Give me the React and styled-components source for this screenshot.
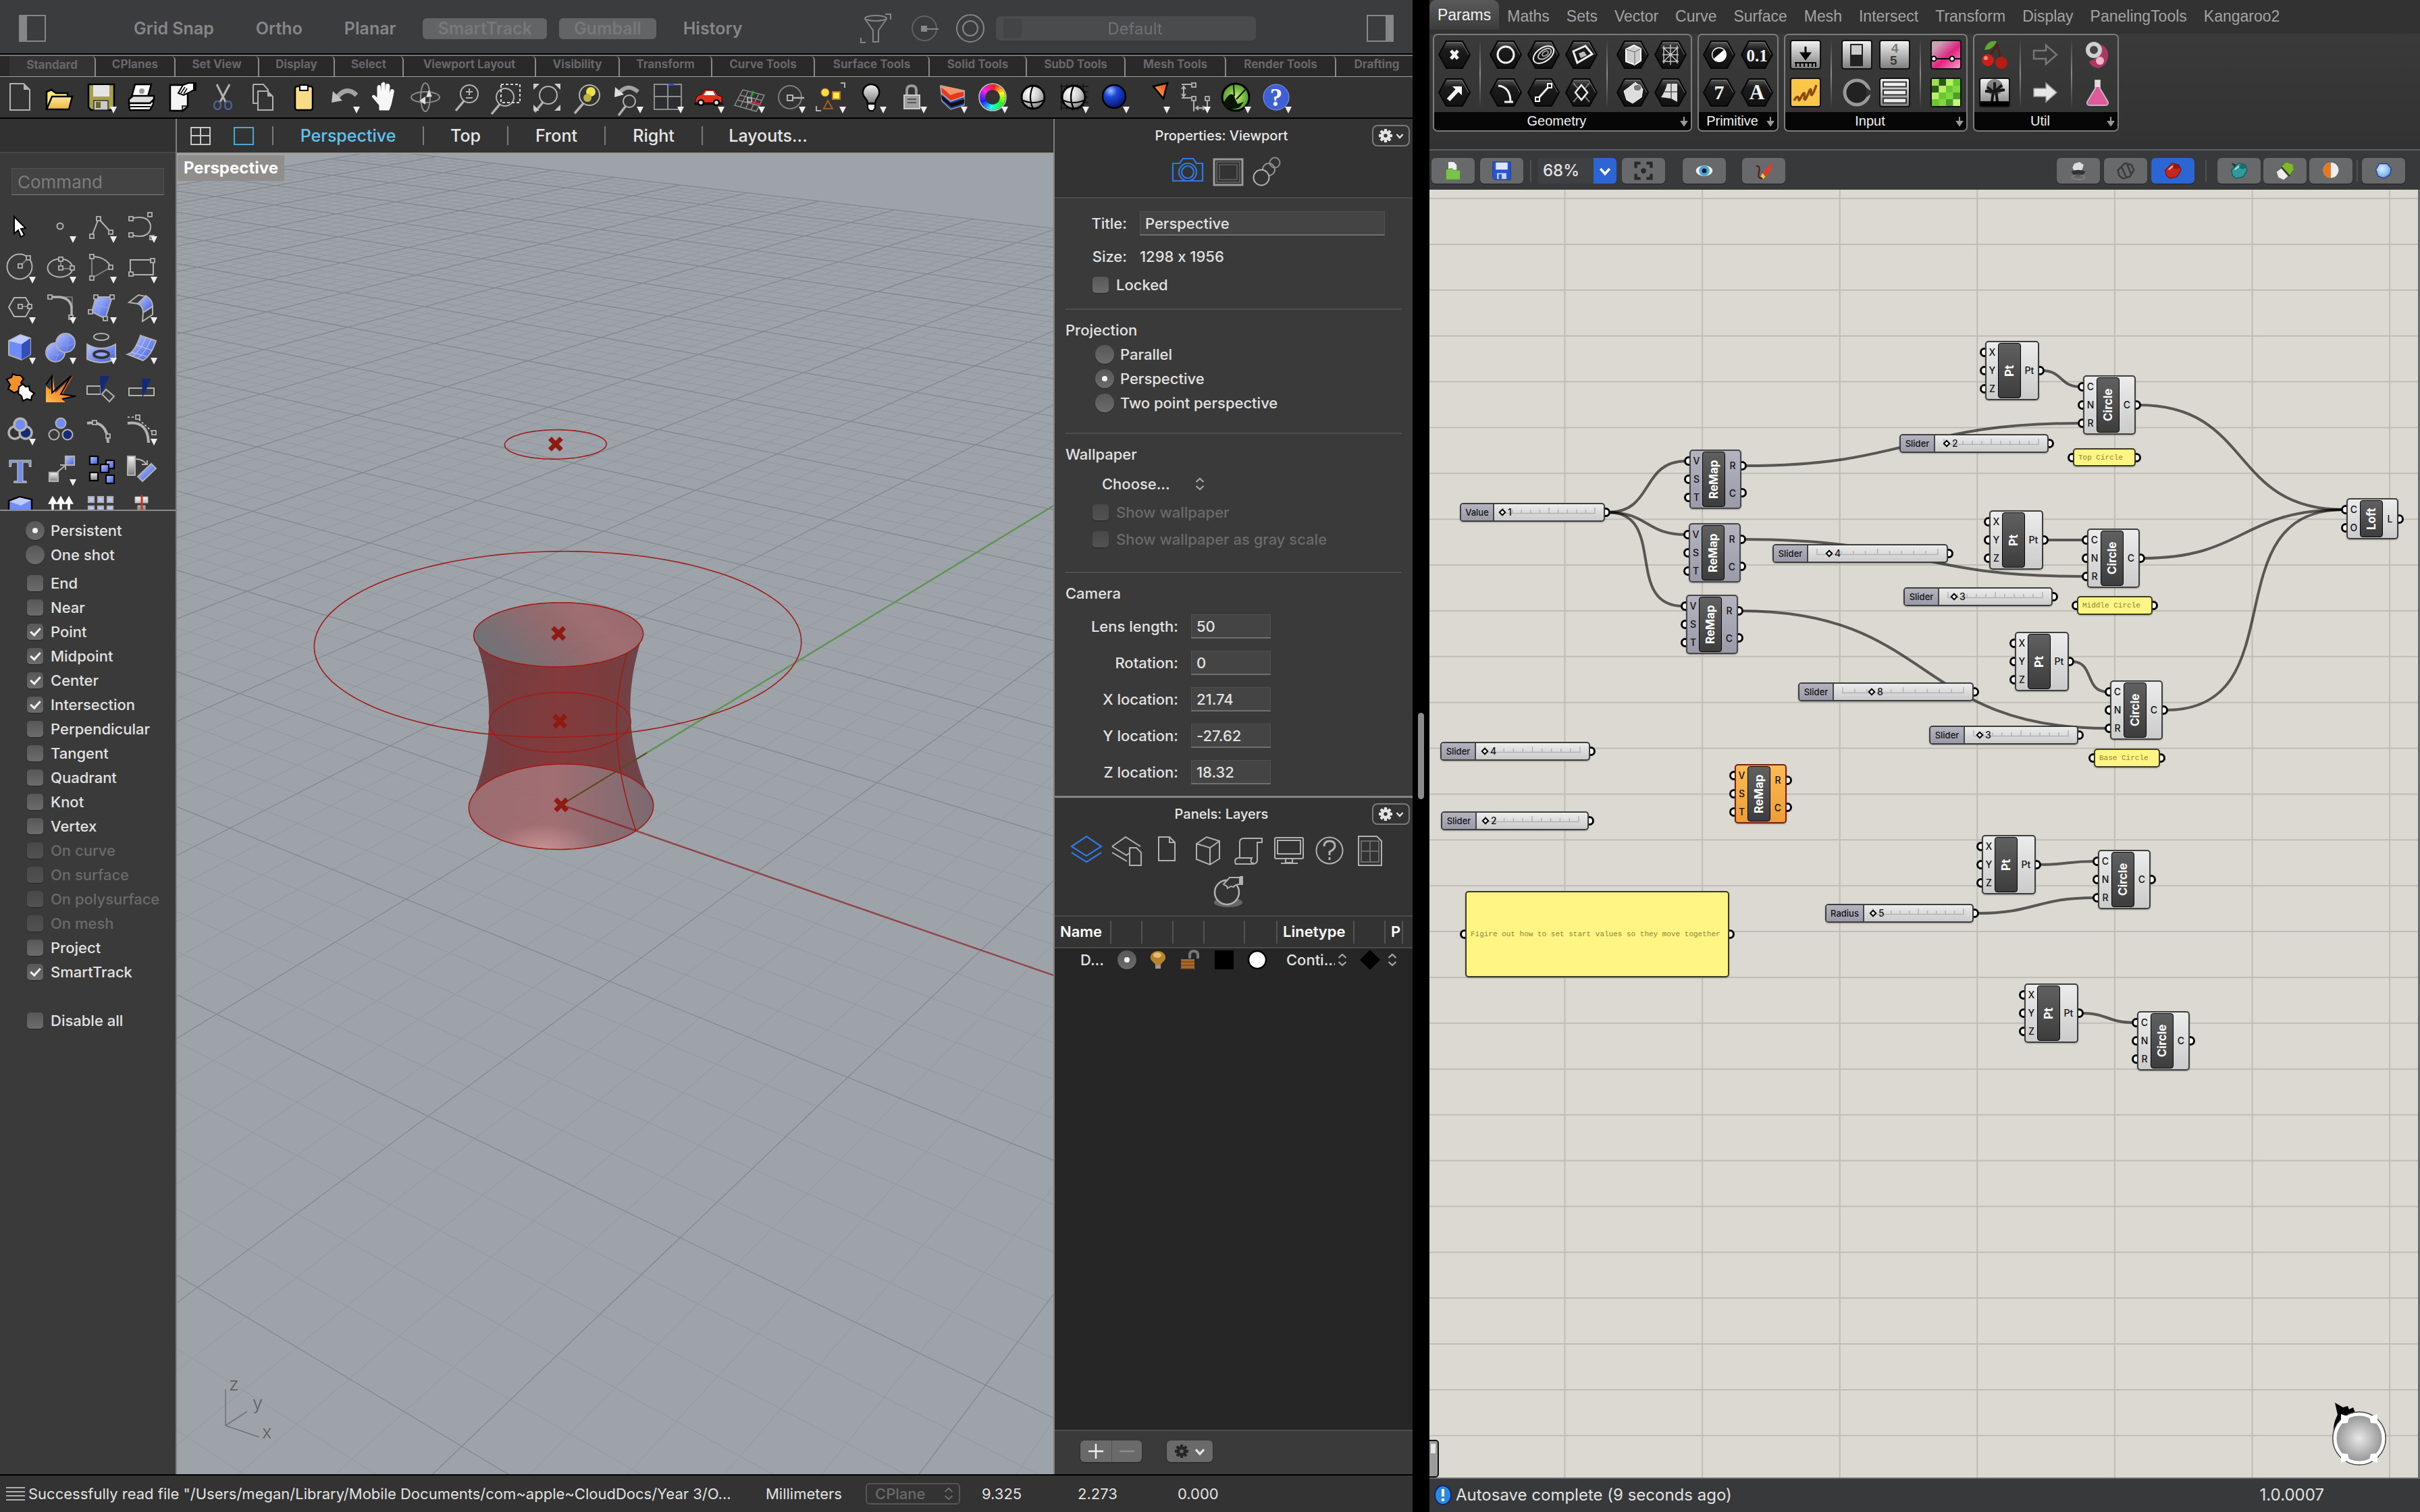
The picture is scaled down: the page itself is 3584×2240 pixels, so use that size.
import React from "react";
import styled, { createGlobalStyle, css } from "styled-components";

const SANS = `Inter, "Liberation Sans", sans-serif`;
const HELV = `"Liberation Sans", Arial, sans-serif`;
const MONO = `"Liberation Mono", "Courier New", monospace`;

const GlobalStyle = createGlobalStyle`
  * { box-sizing: border-box; }
  html, body { margin: 0; padding: 0; background: #000; }
  body { font-family: ${SANS}; font-feature-settings: "calt" 0; color: #e2e2e2; font-size: 22px; }
  button, input, select { font: inherit; font-feature-settings: inherit; color: inherit; margin: 0; }
  button { padding: 0; border: 0; background: none; }
  svg { display: block; flex: none; }
`;

/* ---------- shell ---------- */

const Desktop = styled.main`
  display: grid;
  grid-template-columns: minmax(0, 1.426fr) 25px minmax(0, 1fr);
  height: 100vh;
  background: #000;
`;

const Splitter = styled.div`
  display: flex;
  align-items: center;
  justify-content: center;
`;

const SplitterGrip = styled.span`
  width: 9px;
  height: 128px;
  border-radius: 5px;
  background: #8c8c8c;
`;

const Window = styled.section`
  display: flex;
  flex-direction: column;
  min-width: 0;
  min-height: 0;
  overflow: hidden;
`;

/* ---------- modeller: top bar ---------- */

const TopBar = styled.header`
  display: flex;
  align-items: center;
  height: 81px;
  flex: none;
  padding: 5px 28px 0;
  background: #3b3c3e;
  border-bottom: 2px solid #000;
`;

const IconButton = styled.button`
  display: flex;
  align-items: center;
  justify-content: center;
  width: ${(p) => p.$w || 60}px;
  height: ${(p) => p.$h || 60}px;
  flex: none;
  overflow: hidden;
`;

const SnapGroup = styled.div`
  display: flex;
  gap: 18px;
  margin-left: 108px;
`;

const SnapButton = styled.button`
  height: 31px;
  padding: 0 22px;
  border-radius: 6px;
  font-size: 25px;
  line-height: 31px;
  font-weight: 600;
  white-space: nowrap;
  color: ${(p) => (p.$on ? "#77787a" : "#868688")};
  background: ${(p) => (p.$on ? "#636466" : "transparent")};
`;

const TopTools = styled.div`
  display: flex;
  align-items: center;
  margin-left: auto;
`;

const StyleField = styled.button`
  display: flex;
  align-items: center;
  width: 385px;
  height: 36px;
  margin: 0 164px 0 8px;
  padding: 0 11px;
  border-radius: 7px;
  background: #4a4b4d;
  color: #6f7072;
  font-size: 24px;
`;

const StyleSwatch = styled.span`
  width: 27px;
  height: 28px;
  background: #434446;
`;

const StyleName = styled.span`
  flex: 1;
  text-align: center;
`;

/* ---------- modeller: tool tabs ---------- */

const ToolTabs = styled.nav`
  display: flex;
  height: 33px;
  flex: none;
  padding-left: 14px;
  overflow: hidden;
  background: #292929;
  border-top: 2px solid #77767c;
  border-bottom: 1px solid #a0a0a0;
`;

const ToolTab = styled.button`
  width: ${(p) => p.$w}px;
  height: ${(p) => (p.$on ? 31 : 30)}px;
  flex: none;
  border-right: 2px solid #8a8a8a;
  border-radius: 0 6px 0 0;
  font-size: 17px;
  line-height: 24px;
  padding-bottom: 6px;
  font-weight: 700;
  color: #68686a;
  white-space: nowrap;
  background: ${(p) => (p.$on ? "#333" : "transparent")};
`;

const Toolbar = styled.div`
  display: flex;
  height: 62px;
  flex: none;
  background: #333;
  border-bottom: 2px solid #000;
`;

const Workspace = styled.div`
  display: grid;
  grid-template-columns: 262px minmax(0, 1fr) 532px;
  flex: 1;
  min-height: 0;
`;

/* ---------- modeller: sidebar ---------- */

const Sidebar = styled.aside`
  display: flex;
  flex-direction: column;
  min-height: 0;
  border-right: 2px solid #808080;
  background: #3a3a3a;
`;

const SidebarHead = styled.div`
  height: 51px;
  flex: none;
  background: #313131;
  border-bottom: 2px solid #474747;
`;

const CommandInput = styled.input`
  width: 226px;
  height: 40px;
  margin: 22px 17px 17px;
  padding: 0 8px;
  flex: none;
  border: 1px solid #505050;
  border-bottom: 1px solid #808080;
  background: #434343;
  font-size: 26px;
  outline: none;
  &::placeholder { color: #7c7c7c; opacity: 1; }
`;

const ToolGrid = styled.div`
  display: grid;
  grid-template-columns: repeat(4, 60px);
  grid-auto-rows: 60px;
  height: 449px;
  flex: none;
  overflow: hidden;
`;

const SnapOptions = styled.form`
  display: flex;
  flex-direction: column;
  padding-top: 11px;
  border-top: 2px solid #8a8a8a;
`;

const OptionGroup = styled.div`
  display: flex;
  flex-direction: column;
  margin-bottom: ${(p) => p.$gap || 0}px;
`;

const Option = styled.label`
  display: flex;
  align-items: center;
  height: ${(p) => p.$h || 36}px;
  padding-left: ${(p) => p.$indent || 38}px;
  gap: 9px;
  font-size: 22px;
  font-weight: 500;
  color: ${(p) => (p.$off ? "#6a6a6a" : "#e2e2e2")};
`;

const box = css`
  appearance: none;
  display: grid;
  place-items: center;
  flex: none;
  background: linear-gradient(#585858, #6c6c6c);
  box-shadow: 0 1px 1px rgba(0, 0, 0, 0.35);
  &:disabled { background: linear-gradient(#494949, #525252); }
`;

const Check = styled.input.attrs({ type: "checkbox" })`
  ${box}
  width: 24px;
  height: 24px;
  margin: 0 2px;
  border-radius: 5px;
  &:checked::after {
    content: "";
    width: 6px;
    height: 12px;
    margin-top: -4px;
    border: solid #f0f0f0;
    border-width: 0 3px 3px 0;
    transform: rotate(42deg);
  }
`;

const Radio = styled.input.attrs({ type: "radio" })`
  ${box}
  width: 28px;
  height: 28px;
  border-radius: 50%;
  &:checked::after {
    content: "";
    width: 8px;
    height: 8px;
    border-radius: 50%;
    background: #f2f2f2;
  }
`;

/* ---------- modeller: viewport ---------- */

const ViewColumn = styled.div`
  display: flex;
  flex-direction: column;
  min-width: 0;
  min-height: 0;
`;

const ViewTabs = styled.nav`
  display: flex;
  align-items: center;
  height: 52px;
  flex: none;
  padding: 0 0 0 3px;
  background: #333;
  border-bottom: 2px solid #9c9c98;
`;

const ViewTabRow = styled.div`
  display: flex;
  margin-left: 10px;
`;

const ViewTab = styled.button`
  height: 28px;
  width: ${(p) => p.$w}px;
  border-left: 2px solid #7a7a7a;
  font-size: 25px;
  line-height: 28px;
  font-weight: 500;
  color: ${(p) => (p.$on ? "#62c4ec" : "#e6e6e6")};
`;

const Viewport = styled.div`
  position: relative;
  flex: 1;
  min-height: 0;
  overflow: hidden;
  background: #9ea3aa;
  & > svg { width: 100%; height: 100%; }
`;

const ViewLabel = styled.h2`
  position: absolute;
  left: 1px;
  top: 2px;
  margin: 0;
  padding: 0 9px;
  font-size: 24px;
  line-height: 38px;
  font-weight: 700;
  color: #fff;
  background: #8f8e8c;
`;

/* ---------- modeller: right panels ---------- */

const Panels = styled.aside`
  display: flex;
  flex-direction: column;
  min-width: 0;
  min-height: 0;
  border-left: 2px solid #808080;
  background: #3a3a3a;
`;

const PanelHead = styled.header`
  display: flex;
  flex-direction: column;
  flex: none;
  background: #333;
  border-bottom: 2px solid #4a4a4a;
`;

const LayerHeadBlock = styled(PanelHead)`
  border-top: 3px solid #848484;
`;

const PanelTitleRow = styled.div`
  display: grid;
  grid-template-columns: 24px 1fr 60px;
  align-items: center;
  height: ${(p) => p.$h}px;
`;

const PanelTitle = styled.h2`
  margin: 0;
  text-align: center;
  font-size: 20px;
  font-weight: 500;
  color: #e8e8e8;
`;

const GearButton = styled.button`
  display: flex;
  align-items: center;
  justify-content: center;
  gap: 4px;
  width: 56px;
  height: 32px;
  border: 2px solid #7a7a7a;
  border-radius: 8px;
`;

const IconRow = styled.div`
  display: flex;
  flex-wrap: wrap;
  justify-content: center;
  padding: 0 25px 6px 10px;
`;

const Section = styled.section`
  display: flex;
  flex-direction: column;
  margin: 0 16px;
  padding: ${(p) => p.$pad};
  border-bottom: ${(p) => (p.$last ? "0" : "2px solid #4e4e4e")};
`;

const SectionTitle = styled.h3`
  margin: 0 0 ${(p) => p.$gap || 0}px;
  height: 36px;
  font-size: 22px;
  line-height: 36px;
  font-weight: 500;
`;

const Field = styled.div`
  display: grid;
  grid-template-columns: ${(p) => p.$label}px 1fr;
  column-gap: 19px;
  align-items: center;
  height: ${(p) => p.$h}px;
  font-size: 22px;
  font-weight: 500;
`;

const FieldLabel = styled.label`
  text-align: right;
`;

const TextInput = styled.input`
  width: ${(p) => p.$w};
  height: 36px;
  padding: 0 7px;
  border: 1px solid #505050;
  border-bottom: 2px solid #707070;
  background: #444;
  font-size: 22px;
  font-weight: 500;
  outline: none;
`;

const SelectBox = styled.span`
  display: inline-flex;
  align-items: center;
  gap: 4px;
  padding: ${(p) => p.$pad || "0"};
  width: ${(p) => p.$w}px;
  height: ${(p) => p.$h || 36}px;
  border: ${(p) => (p.$framed ? "2px solid #565656" : "0")};
  border-radius: 6px;
  color: ${(p) => (p.$framed ? "#6a6a6a" : "inherit")};
`;

const Select = styled.select`
  appearance: none;
  flex: 1;
  min-width: 0;
  border: 0;
  padding: 0;
  background: transparent;
  font-size: 22px;
  font-weight: 500;
  outline: none;
  &:disabled { opacity: 1; }
`;

const BarSelect = styled(Select)`
  padding-left: 7px;
  font-size: 24px;
`;

const LayerTable = styled.table`
  width: 100%;
  table-layout: fixed;
  border-collapse: collapse;
  font-size: 22px;
`;

const LayerHead = styled.th`
  width: ${(p) => (p.$w ? p.$w + "px" : "auto")};
  height: 46px;
  padding: 0;
  text-align: left;
  font-weight: 600;
  color: #fff;
  background: #333;
  border-bottom: 2px solid #4a4a4a;
`;

const HeadCell = styled.span`
  display: block;
  height: 34px;
  line-height: 32px;
  padding-left: 8px;
  overflow: hidden;
  border-right: ${(p) => (p.$last ? "0" : "2px solid #525252")};
`;

const LayerCell = styled.td`
  height: 34px;
  padding: 0 ${(p) => p.$right || 0}px 0 ${(p) => p.$pad || 0}px;
  font-weight: 500;
  white-space: nowrap;
  & > svg, & > input { margin: 0 auto; }
`;

const LayerList = styled.div`
  flex: 1;
  min-height: 0;
  background: #262626;
`;

const PanelFoot = styled.footer`
  display: flex;
  align-items: flex-start;
  gap: 37px;
  height: 66px;
  flex: none;
  padding: 14px 38px;
  border-top: 2px solid #4c4c4c;
`;

const Segments = styled.div`
  display: flex;
  border-radius: 6px;
  background: #6a6a6a;
  box-shadow: 0 1px 2px rgba(0, 0, 0, 0.4);
`;

const Segment = styled.button`
  display: flex;
  align-items: center;
  justify-content: center;
  gap: 8px;
  width: ${(p) => p.$w}px;
  height: 32px;
  border-left: ${(p) => (p.$split ? "1px solid #555" : "0")};
`;

const StatusBar = styled.footer`
  display: grid;
  grid-template-columns: 33px 1092px 148px 172px 142px 148px 1fr;
  align-items: center;
  height: 56px;
  flex: none;
  padding-left: 9px;
  border-top: 2px solid #000;
  background: #333;
  font-size: 22px;
  white-space: nowrap;
`;

/* ---------- node editor: chrome ---------- */

const EditorTabs = styled.nav`
  display: flex;
  align-items: flex-start;
  height: 50px;
  flex: none;
  background: #323232;
`;

const EditorTab = styled.button`
  margin-left: ${(p) => (p.$on ? 0 : 12)}px;
  margin-right: ${(p) => (p.$on ? 0 : 13)}px;
  padding: ${(p) => (p.$on ? "0 12px" : "0")};
  height: 44px;
  line-height: ${(p) => (p.$on ? 40 : 48)}px;
  border-radius: 10px 10px 0 0;
  font-family: ${HELV};
  font-size: 23px;
  color: ${(p) => (p.$on ? "#f0f0f0" : "#a3a3a3")};
  background: ${(p) => (p.$on ? "linear-gradient(#5a5a5a, #3c3c3c)" : "none")};
`;

const Ribbon = styled.div`
  display: flex;
  gap: 8px;
  height: 171px;
  flex: none;
  padding: 0 5px 26px;
  background: linear-gradient(#3a3a3a, #323232);
`;

const RibbonPanel = styled.section`
  display: flex;
  flex-direction: column;
  border: 2px solid #7d7d7d;
  border-radius: 7px;
  overflow: hidden;
`;

const RibbonBody = styled.div`
  display: flex;
  flex: 1;
  padding: 7px 6px;
`;

const RibbonGroup = styled.div`
  display: grid;
  grid-template-rows: 44px 44px;
  grid-auto-flow: column;
  grid-auto-columns: 48px;
  gap: 12px 8px;
  & + & {
    margin-left: 13px;
    padding-left: 13px;
    border-left: 2px solid;
    border-image: linear-gradient(transparent, #8a8a8a, transparent) 1;
  }
`;

const RibbonFoot = styled.h3`
  display: flex;
  align-items: center;
  height: 27px;
  margin: 0;
  padding-right: 3px;
  background: #060606;
  font-family: ${HELV};
  font-size: 20px;
  font-weight: 400;
  color: #f0f0f0;
`;

const RibbonName = styled.span`
  flex: 1;
  text-align: center;
`;

const EditorBar = styled.div`
  display: flex;
  align-items: center;
  height: 60px;
  flex: none;
  padding: 1px 22px 0 3px;
  border-top: 2px solid #5e5f60;
  background: #38393b;
`;

const BarButton = styled.button`
  display: flex;
  align-items: center;
  justify-content: center;
  width: 64px;
  height: 38px;
  flex: none;
  border-radius: 6px;
  background: ${(p) => (p.$on ? "#2b66d4" : "#68696a")};
  box-shadow: 0 1px 1px rgba(0, 0, 0, 0.4);
`;

const BarGroup = styled.div`
  display: flex;
  align-items: center;
  gap: ${(p) => p.$gap}px;
  margin-left: ${(p) => p.$left || "0"};
`;

const BarRule = styled.span`
  width: 2px;
  height: 32px;
  background: #505152;
`;

const ZoomBox = styled.label`
  display: flex;
  align-items: center;
  width: 116px;
  height: 38px;
  border-radius: 0 6px 6px 0;
  overflow: hidden;
  background: #3f4042;
`;

const ZoomArrow = styled.span`
  display: flex;
  align-items: center;
  justify-content: center;
  width: 34px;
  height: 38px;
  background: #2b66d4;
`;

const EditorStatus = styled.footer`
  display: flex;
  align-items: center;
  justify-content: space-between;
  height: 51px;
  flex: none;
  padding: 0 142px 2px 7px;
  border-top: 2px solid #66676a;
  background: #38393b;
  font-size: 24px;
`;

const StatusText = styled.span`
  display: flex;
  align-items: center;
  gap: 6px;
`;

/* ---------- node editor: canvas ---------- */

const Canvas = styled.div`
  position: relative;
  flex: 1;
  min-height: 0;
  overflow: hidden;
  border-right: 3px solid #6a6c6e;
  background: #dcd9d3;
  color: #111;
`;

const CanvasLayer = styled.svg`
  position: absolute;
  inset: 0;
  width: 100%;
  height: 100%;
`;

const NodeWrap = styled.div`
  position: absolute;
  left: ${(p) => p.$x}px;
  top: ${(p) => p.$y}px;
  width: ${(p) => p.$w}px;
  height: ${(p) => p.$h}px;
`;

const skins = {
  plain: ["#ececec", "#cbcbcb", "#3e3e3e"],
  muted: ["#b4b3bf", "#9b9aa9", "#45454c"],
  picked: ["#fbbb56", "#ee9d35", "#7a1f10"],
  note: ["#fef582", "#fef582", "#3b3b20"],
};

const NodeBody = styled.div`
  position: relative;
  display: grid;
  grid-template-columns: ${(p) => p.$cols || "1fr"};
  width: 100%;
  height: 100%;
  padding: ${(p) => p.$pad || "0"};
  border: 2px solid ${(p) => skins[p.$skin][2]};
  border-radius: 5px;
  overflow: hidden;
  background: linear-gradient(${(p) => skins[p.$skin][0]}, ${(p) => skins[p.$skin][1]});
  box-shadow: 0 1px 2px rgba(0, 0, 0, 0.3);
`;

const Ports = styled.div`
  display: flex;
  flex-direction: column;
  justify-content: space-around;
  text-align: center;
  font-size: 14px;
  line-height: 16px;
  font-weight: 500;
`;

const NodeName = styled.div`
  display: flex;
  align-items: center;
  justify-content: center;
  writing-mode: vertical-rl;
  transform: rotate(180deg);
  border: 1px solid #000;
  border-radius: 4px;
  background: linear-gradient(#3d3d3d, #606060);
  color: #fff;
  font-size: 17px;
  font-weight: 700;
`;

const PortDot = styled.span`
  position: absolute;
  width: 14px;
  height: 14px;
  top: ${(p) => p.$y - 7}px;
  ${(p) => (p.$side === "in" ? "left: -8px;" : "right: -8px;")}
  border: 3px solid #000;
  border-radius: 50%;
  background: #fff;
`;

const SliderName = styled.label`
  display: flex;
  align-items: center;
  justify-content: center;
  font-size: 13px;
  font-weight: 500;
  background: linear-gradient(#b4b3bf, #9b9aa9);
  border-right: 2px solid #45454c;
`;

const SliderTrack = styled.div`
  position: relative;
`;

const Ticks = styled.svg`
  position: absolute;
  left: 12px;
  top: 4px;
  width: calc(100% - 24px);
  height: 12px;
`;

const Range = styled.input.attrs({ type: "range" })`
  appearance: none;
  position: absolute;
  inset: 0;
  width: 100%;
  height: 23px;
  background: transparent;
  outline: none;
  &::-webkit-slider-thumb {
    appearance: none;
    width: 8px;
    height: 8px;
    border: 2px solid #000;
    background: #fff;
    transform: rotate(45deg);
  }
`;

const SliderValue = styled.output`
  position: absolute;
  top: 4px;
  font-size: 14px;
  line-height: 16px;
  font-weight: 500;
`;

const NoteText = styled.p`
  align-self: center;
  margin: 0;
  padding-left: 6px;
  font-family: ${MONO};
  font-size: 11px;
  line-height: 14px;
  color: #8c8440;
  white-space: nowrap;
`;

/* ---------- icon helpers ---------- */

const LINE = "#b2b2b2";
const g = { fill: "none", stroke: LINE, strokeWidth: 2 };
const Glyph = ({ s = 60, vb = "0 0 60 60", children }) => (
  <svg width={s} height={s} viewBox={vb} aria-hidden="true">{children}</svg>
);
const Hd = ({ x, y }) => (
  <rect x={x - 3} y={y - 3} width="6" height="6" fill="#3a3a3a" stroke={LINE} strokeWidth="1.8" />
);
const Drop = () => <path d="M43 44h10l-5 10z" fill="#eee" />;

const Palette = styled.svg`
  position: absolute;
  width: 0;
  height: 0;
`;

const Defs = () => (
  <Palette aria-hidden="true">
    <defs>
      <linearGradient id="blue" x1="0" y1="0" x2="1" y2="1">
        <stop offset="0" stopColor="#b9c6fb" /><stop offset="1" stopColor="#3d5be0" />
      </linearGradient>
      <linearGradient id="gold" x1="0" y1="0" x2="0" y2="1">
        <stop offset="0" stopColor="#ffe79a" /><stop offset="1" stopColor="#eab640" />
      </linearGradient>
      <linearGradient id="fire" x1="0" y1="1" x2="1" y2="0">
        <stop offset="0" stopColor="#fcc244" /><stop offset="1" stopColor="#e8401c" />
      </linearGradient>
      <linearGradient id="steel" x1="0" y1="0" x2="0" y2="1">
        <stop offset="0" stopColor="#f4f4f4" /><stop offset="1" stopColor="#7c7c7c" />
      </linearGradient>
      <linearGradient id="pink" x1="0" y1="0" x2="1" y2="1">
        <stop offset="0.2" stopColor="#c9a0b4" /><stop offset="0.55" stopColor="#e0237f" /><stop offset="1" stopColor="#f8a4d0" />
      </linearGradient>
      <linearGradient id="hexfill" x1="0" y1="0" x2="0" y2="1">
        <stop offset="0" stopColor="#5a5a5a" /><stop offset="0.3" stopColor="#1c1c1c" /><stop offset="1" stopColor="#111" />
      </linearGradient>
      <radialGradient id="ball" cx="0.35" cy="0.3" r="0.8">
        <stop offset="0" stopColor="#fff" /><stop offset="0.5" stopColor="#d0d0d0" /><stop offset="1" stopColor="#6a6a6a" />
      </radialGradient>
      <radialGradient id="blueball" cx="0.35" cy="0.25" r="0.8">
        <stop offset="0" stopColor="#9fc0ff" /><stop offset="0.35" stopColor="#1d48d8" /><stop offset="1" stopColor="#06106a" />
      </radialGradient>
      <radialGradient id="sky" cx="0.4" cy="0.35" r="0.7">
        <stop offset="0" stopColor="#d8efff" /><stop offset="0.7" stopColor="#7fb8f0" /><stop offset="1" stopColor="#2c4fa8" />
      </radialGradient>
      <radialGradient id="green" cx="0.5" cy="0.5" r="0.5">
        <stop offset="0" stopColor="#c8f07a" /><stop offset="1" stopColor="#4f9a28" />
      </radialGradient>
      <radialGradient id="dial" cx="0.5" cy="0.5" r="0.5">
        <stop offset="0" stopColor="#e8e8e8" /><stop offset="1" stopColor="#8c8c8c" />
      </radialGradient>
    </defs>
  </Palette>
);

const Gear = ({ s = 22, c = "#e4e4e4", hole = "#333" }) => (
  <svg width={s} height={s} viewBox="-12 -12 24 24" aria-hidden="true">
    {[0, 45, 90, 135].map((a) => (
      <rect key={a} x="-2.4" y="-11" width="4.8" height="22" rx="1" fill={c} transform={`rotate(${a})`} />
    ))}
    <circle r="5.6" fill="none" stroke={c} strokeWidth="4.6" />
    <circle r="3" fill={hole} />
  </svg>
);
const Chevron = ({ c = "#e4e4e4", s = 12 }) => (
  <svg width={s} height={s} viewBox="0 0 12 12" aria-hidden="true">
    <path d="M1.5 4l4.5 5 4.5-5" fill="none" stroke={c} strokeWidth="2.4" />
  </svg>
);
const UpDown = ({ c = "#a8a8a8" }) => (
  <svg width="14" height="20" viewBox="0 0 14 20" aria-hidden="true">
    <path d="M1.500 7L7 2l5.500 5M1.500 13L7 18l5.500-5" fill="none" stroke={c} strokeWidth="2.200" />
  </svg>
);

/* ---------- standard toolbar ---------- */

const lens = (x, y, r) => (
  <>
    <circle cx={x} cy={y} r={r} {...g} />
    <path d={`M${x - r * 0.6} ${y + r * 0.8}L${x - r - 7} ${y + r + 12}`} stroke={LINE} strokeWidth="3.500" />
  </>
);
const wireBall = (
  <>
    <circle cx="30" cy="30" r="17" fill="url(#ball)" stroke="#000" strokeWidth="3" />
    <path d="M30 13q-8 17 0 34M13 34q17 8 34 0" fill="none" stroke="#000" strokeWidth="2.200" />
  </>
);

const toolbar = [
  ["New", false, <><path d="M15 10h20l9 9v30H15z" {...g} /><path d="M35 10v9h9z" fill={LINE} /></>],
  ["Open", false, <><path d="M9 48V22l7-3 7 5h17v8" fill="#fbe67c" stroke="#000" strokeWidth="2.500" /><path d="M9 48l8-19h30l-5 19z" fill="url(#gold)" stroke="#000" strokeWidth="2.500" /></>],
  ["Save", true, <><path d="M11 11h38v38H15l-4-4z" fill="#a79f4a" stroke="#000" strokeWidth="2.500" /><path d="M18 12h24v17H18z" fill="#e4e4e4" /><path d="M19 35h21v14H19z" fill="#c9c9cf" stroke="#333" strokeWidth="1.500" /><path d="M22 37h7v9h-7z" fill="#6c6528" /></>],
  ["Print", false, <><path d="M20 11h24l-5 18H15z" fill="#fff" stroke="#000" strokeWidth="2.500" /><path d="M11 33l6-5h31v6l-6 5H11z" fill="#ddd" stroke="#000" strokeWidth="2.500" /><path d="M11 39h31l5-5v6l-5 9H12z" fill="#fff" stroke="#000" strokeWidth="2.500" /><path d="M12 44h31" stroke="#000" strokeWidth="2" /><circle cx="30" cy="21" r="4" fill="#999" /></>],
  ["Document properties", false, <><path d="M12 12h26v32l-7 6H12z" fill="#f5f5f5" stroke="#000" strokeWidth="2.500" /><path d="M30 50v-7h8z" fill="#bbb" stroke="#000" strokeWidth="1.500" /><path d="M24 24l7-12 8-3h8v10l-7 4-8 4z" fill="#fff" stroke="#000" strokeWidth="2" /><path d="M28 24l6-9M32 25l5-8" stroke="#000" strokeWidth="1.500" /><path d="M47 8h4v13h-4z" fill="#000" /></>],
  ["Cut", false, <><path d="M21 11l13 26M40 11L26 37" stroke={LINE} strokeWidth="3" /><ellipse cx="22" cy="42" rx="5" ry="6" fill="none" stroke="#515f94" strokeWidth="2.500" /><ellipse cx="38" cy="42" rx="5" ry="6" fill="none" stroke="#515f94" strokeWidth="2.500" /></>],
  ["Copy", false, <><path d="M15 11h15l7 8v5M15 11v28h7" {...g} /><path d="M22 21h14l8 8v20H22z" fill="#333" stroke={LINE} strokeWidth="2" /><path d="M36 21v8h8z" fill={LINE} /></>],
  ["Paste", false, <><rect x="17" y="14" width="26" height="35" rx="3" fill="#f8dc86" stroke="#000" strokeWidth="2.500" /><path d="M24 12h12v8H24z" fill="#fff" stroke="#000" strokeWidth="2" /></>],
  ["Undo", true, <><path d="M18 32q14-20 30-5" fill="none" stroke="#a2a2a2" strokeWidth="7" /><path d="M11 38l2-17 14 14z" fill="#c0c0c0" /></>],
  ["Pan", false, <path d="M22 49v-7L11 29q2-5 8 3V16q0-5 4-3l2 13V10q4-4 5 0v16l2-15q4-2 5 2l-1 15 3-9q5-2 4 4l-4 18-3 8z" fill="#f6f6f6" stroke="#fff" />],
  ["Rotate view", false, <><ellipse cx="30" cy="30" rx="21" ry="8" {...g} stroke="#8c8c8c" /><ellipse cx="30" cy="30" rx="7" ry="21" {...g} stroke="#8c8c8c" /><path d="M30 29v12l-9-6zM31 30l4-11 5 10z" fill="#ddd" /></>],
  ["Zoom dynamic", false, <>{lens(35, 25, 13)}<path d="M30 22h10M35 17v10M30 31h10" stroke={LINE} strokeWidth="2" /></>],
  ["Zoom window", false, <>{lens(28, 30, 13)}<rect x="22" y="11" width="28" height="27" fill="none" stroke="#ddd" strokeWidth="2" strokeDasharray="4 3" /></>],
  ["Zoom extents", false, <>{lens(32, 27, 13)}<path d="M10 10h9l-9 9zM50 10v9l-9-9zM50 50h-9l9-9zM10 50v-9l9 9z" fill="#ccc" /></>],
  ["Zoom selected", false, <>{lens(33, 27, 15)}<circle cx="35" cy="22" r="7" fill="#e9e04c" /><circle cx="30" cy="31" r="6" fill="#b9b142" /></>],
  ["Zoom previous", true, <><path d="M16 25q13-17 29-3" fill="none" stroke="#a2a2a2" strokeWidth="6" /><path d="M10 30l1-15 13 11z" fill="#ddd" />{lens(32, 36, 9)}</>],
  ["Viewports", true, <><rect x="9" y="11" width="40" height="37" fill="#2c2e31" stroke="#8f8f8f" strokeWidth="2" /><path d="M29 11v37M9 29h40" stroke="#8f8f8f" strokeWidth="2" /><path d="M30 12h8" stroke="#2440c0" strokeWidth="3" /></>],
  ["Named view", true, <><path d="M8 40h43" stroke="#111" strokeWidth="3" /><path d="M10 34q3-8 9-8l5-7h14l5 8 6 2v9H10z" fill="#e0301c" stroke="#3a0000" /><path d="M26 21h10l3 6H22z" fill="#fff" /><circle cx="18" cy="38" r="4" fill="#ddd" stroke="#000" strokeWidth="2.500" /><circle cx="41" cy="38" r="4" fill="#ddd" stroke="#000" strokeWidth="2.500" /></>],
  ["Construction plane", true, <><path d="M8 42L20 19l32 8-12 24zM12 34l33 9M16 27l33 8M28 21L16 45M36 23L24 47M44 25L32 49" fill="none" stroke="#8c8c8c" strokeWidth="1.500" /><path d="M30 34l6-13" stroke="#2f9a2f" strokeWidth="3" /><path d="M32 36l15 5" stroke="#c23" strokeWidth="3" /><Hd x={30} y={34} /></>],
  ["Object snap", true, <><circle cx="30" cy="30" r="17" fill="none" stroke="#7c7c7c" strokeWidth="2" /><path d="M34 31h17" stroke={LINE} strokeWidth="2.500" /><rect x="26" y="27" width="8" height="8" {...g} /></>],
  ["Select", true, <><circle cx="22" cy="23" r="6" fill="#fbd944" stroke="#b57a20" /><rect x="33" y="22" width="11" height="11" fill="#fbe84c" stroke="#b57a20" strokeWidth="2" /><path d="M26 35l7 12H20z" fill="none" stroke="#a45a20" strokeWidth="2" /><path d="M45 9h6v7M9 43v7h7" {...g} /></>],
  ["Hide", true, <><path d="M30 11c9 0 13 7 12 14-1 6-6 8-6 14H25c0-6-6-8-7-14-1-7 4-14 12-14z" fill="url(#steel)" stroke="#000" strokeWidth="2.500" /><path d="M25 40h11v6l-3 4h-5l-3-4z" fill="#eee" stroke="#000" strokeWidth="2" /></>],
  ["Lock", true, <><path d="M23 27V20q0-7 7-7t7 7v7" fill="none" stroke="#999" strokeWidth="4" /><rect x="19" y="27" width="23" height="20" fill="#9e9e9e" stroke="#ccc" strokeWidth="2" /><path d="M24 33h13M24 38h13" stroke="#555" strokeWidth="2" /></>],
  ["Layers", true, <><path d="M15 36l13 12 20-6V20L13 13z" fill="#2446b0" stroke="#999" strokeWidth="1.500" /><path d="M14 27l14 12 20-6v6l-19 6-14-12z" fill="#111" /><path d="M13 14l14 10 21-3v8l-20 7-14-12z" fill="#e5391d" stroke="#bbb" strokeWidth="1.500" /><path d="M13 12l35 8-21 7z" fill="#f5946c" /></>],
  ["Object color", true, <>{Array.from({ length: 24 }, (_, i) => {
    const a = (i * 15 * Math.PI) / 180, b = ((i + 1.2) * 15 * Math.PI) / 180;
    return <path key={i} d={`M${30 + 15 * Math.sin(a)} ${30 - 15 * Math.cos(a)}L${30 + 15 * Math.sin(b)} ${30 - 15 * Math.cos(b)}`} stroke={`hsl(${i * 15},95%,55%)`} strokeWidth="8" />;
  })}<circle cx="30" cy="30" r="20" fill="none" stroke="#ccc" strokeWidth="1.500" /></>],
  ["Shaded", false, wireBall],
  ["Ghosted", true, <><path d="M10 14h42M10 22h42M10 30h42M10 38h42M10 46h42M12 10v40M20 10v40M28 10v40M36 10v40M44 10v40" stroke="#151515" strokeWidth="1.500" />{wireBall}</>],
  ["Rendered", true, <circle cx="30" cy="29" r="17" fill="url(#blueball)" stroke="#000" strokeWidth="2.500" />],
  ["Spotlight", true, <path d="M28 14l21-5-6 23z" fill="url(#fire)" stroke="#000" strokeWidth="2.500" />],
  ["Dimension", true, <><path d="M10 11h14M10 31h14M13 15v12M10 18l3-4 3 4M10 25l3 4 3-4M28 35v16M48 35v16M32 46h12M35 43l-4 3 4 3M41 43l4 3-4 3" {...g} /><Hd x={28} y={12} /><Hd x={28} y={32} /><Hd x={48} y={32} /></>],
  ["Grasshopper", true, <><circle cx="30" cy="30" r="20" fill="url(#green)" stroke="#000" strokeWidth="3" /><path d="M27 12l1 16M46 17L31 33" fill="none" stroke="#0a1404" strokeWidth="2" /><path d="M12 42q1-9 9-16 7-2 8 6l4 8 9-3-6 8q-12 5-20 0z" fill="#0a1404" /></>],
  ["Help", true, <><circle cx="30" cy="30" r="19" fill="#3f5fd4" stroke="#8aa0f0" /><text x="30" y="43" textAnchor="middle" fontFamily="Liberation Serif, serif" fontWeight="700" fontSize="37" fill="#fff">?</text></>],
];

/* ---------- sidebar tools ---------- */

const blueBall = (x, y, r) => (
  <>
    <circle cx={x} cy={y} r={r} fill="url(#blue)" stroke={LINE} strokeWidth="2" />
    <path d={`M${x - r} ${y}q${r} ${r * 0.6} ${2 * r} 0M${x} ${y - r}q${r * 0.5} ${r} 0 ${2 * r}`} fill="none" stroke="#8a9be8" />
  </>
);
const tile = (x, y, f = "url(#blue)", st = LINE, s = 12) => (
  <rect x={x} y={y} width={s} height={s} fill={f} stroke={st} strokeWidth="2.200" />
);

const sideTools = [
  ["Pointer", 0, <path d="M21 15l17 17-7 1 5 9-5 3-4-10-6 5z" fill="#fff" stroke="#000" strokeWidth="2" />],
  ["Point", 1, <circle cx="29" cy="29" r="4.500" {...g} />],
  ["Polyline", 1, <><path d="M16 44L26 18l18 20" {...g} /><Hd x={16} y={44} /><Hd x={26} y={18} /><Hd x={44} y={38} /></>],
  ["Curve", 1, <><path d="M14 18C34 12 43 20 43 30S34 48 14 42" {...g} /><Hd x={14} y={18} /><Hd x={42} y={12} /><Hd x={14} y={42} /><Hd x={45} y={46} /></>],
  ["Circle", 1, <><circle cx="29" cy="29" r="18.500" {...g} /><path d="M30 28l12-12" stroke="#808080" strokeWidth="2" /><Hd x={30} y={28} /><Hd x={42} y={16} /></>],
  ["Ellipse", 1, <><ellipse cx="29" cy="31" rx="18.500" ry="13.500" {...g} /><path d="M30 18v14h18" fill="none" stroke="#808080" strokeWidth="2" /><Hd x={30} y={18} /><Hd x={30} y={31} /><Hd x={47} y={31} /></>],
  ["Arc", 1, <><path d="M16 14q20 0 28 15" {...g} /><path d="M16 14v32l28-16" fill="none" stroke="#808080" strokeWidth="2" /><Hd x={16} y={14} /><Hd x={44} y={30} /><Hd x={16} y={46} /></>],
  ["Rectangle", 1, <><path d="M13 19h34v22H13z" {...g} /><Hd x={46} y={20} /><Hd x={14} y={40} /></>],
  ["Polygon", 1, <><path d="M13 29l8-14h17l8 14-8 14H21z" {...g} /><path d="M30 28h14" stroke="#808080" strokeWidth="2" /><Hd x={30} y={28} /><Hd x={44} y={28} /></>],
  ["Fillet", 1, <><path d="M28 14h19v16" fill="none" stroke="#808080" strokeWidth="1.500" /><path d="M17 14h11q18 2 18 18v12" fill="none" stroke={LINE} strokeWidth="3.500" /><Hd x={14} y={14} /><Hd x={45} y={44} /></>],
  ["Surface", 1, <><path d="M22 14h24l-10 32-20-10z" fill="url(#blue)" stroke={LINE} strokeWidth="2" /><path d="M34 14l-9 26M18 26l24 4" stroke="#9aa8ee" /><Hd x={22} y={14} /><Hd x={46} y={14} /><Hd x={36} y={46} /><Hd x={14} y={36} /></>],
  ["Bend surface", 1, <><path d="M24 24l12-12q10 6 10 16l-14 9q0-10-8-13z" fill="url(#blue)" stroke={LINE} strokeWidth="2" /><path d="M11 22l14-11 11 2-12 11zM32 37l14-9v12L31 50z" {...g} /></>],
  ["Box", 1, <><path d="M13 19l17-9 15 5v24l-13 8-19-7z" fill="#6f8bf5" stroke={LINE} strokeWidth="2" /><path d="M13 19l17-9 15 5-13 9z" fill="#bccafc" /><path d="M32 24l13-9v24l-13 8z" fill="#3450b8" /></>],
  ["Sphere", 1, <>{blueBall(22, 36, 14)}{blueBall(37, 22, 14)}</>],
  ["Revolve", 1, <><ellipse cx="30" cy="13" rx="11" ry="5" {...g} /><path d="M9 24q21 12 42 0v22q-21 10-42 0z" fill="url(#blue)" stroke={LINE} strokeWidth="2" /><ellipse cx="30" cy="39" rx="11" ry="5" fill="#8ea4f8" stroke="#333" strokeWidth="4" /></>],
  ["Patch", 1, <><path d="M9 39q10-2 19-28l23 8q-6 20-19 29z" fill="url(#blue)" stroke={LINE} strokeWidth="2" /><path d="M16 42q12-8 20-28M24 45q12-10 20-29M22 25l23 8M15 36l22 6" fill="none" stroke="#c4cefc" /></>],
  ["Join", 0, <><path d="M10 16l7-3 2-5 5 2 6 0 5 5-4 6 4 5-6 6-8 4-9-6 3-6z" fill="#f2922c" stroke="#000" strokeWidth="2.200" /><path d="M28 27l6-4 4 4 5-1 1 6 7 5-4 4-1 6-6-2-6 3-2-7-5-4z" fill="#fff" stroke="#000" strokeWidth="2.200" /></>],
  ["Explode", 0, <><path d="M8 50V26l7 6 3-21 4 25 26-25-15 26 18 4-20 4 6 5z" fill="url(#fire)" /><path d="M8 24l9-13 0 25 28-25-15 27 22 3-20 4" fill="none" stroke="#000" strokeWidth="2" /></>],
  ["Trim", 0, <><path d="M9 26h20v12H9z" {...g} /><path d="M31 38l6-7 12 10-7 8z" {...g} /><path d="M28 11h14L29 39z" fill="#152a74" /></>],
  ["Split", 0, <><path d="M11 29h37v11H11z" {...g} /><path d="M30 15h14L31 43z" fill="#152a74" /></>],
  ["Boolean", 1, <><circle cx="22" cy="35" r="9" fill="#333" stroke={LINE} strokeWidth="3.500" /><circle cx="38" cy="35" r="9" fill="#152a74" stroke={LINE} strokeWidth="3.500" /><circle cx="30" cy="23" r="9" fill="#6f8bf5" stroke={LINE} strokeWidth="3.500" /></>],
  ["Group", 0, <><circle cx="30" cy="21" r="7.500" fill="#6f8bf5" stroke={LINE} strokeWidth="2" /><circle cx="20" cy="38" r="7.500" {...g} /><circle cx="40" cy="38" r="7.500" fill="#152a74" stroke={LINE} strokeWidth="2" /></>],
  ["Edit points", 0, <><path d="M9 21q30-5 31 29" fill="none" stroke={LINE} strokeWidth="4" /><Hd x={20} y={20} /><Hd x={40} y={40} /></>],
  ["Control points", 1, <><path d="M9 21q30-4 31 29" fill="none" stroke={LINE} strokeWidth="4" /><path d="M9 12h13l26 24" fill="none" stroke="#ddd" strokeWidth="1.500" strokeDasharray="3 3" /><Hd x={24} y={12} /><Hd x={48} y={35} /></>],
  ["Text", 0, <text x="30" y="49" textAnchor="middle" fontFamily="Liberation Serif, serif" fontWeight="700" fontSize="50" fill="#6f8bf5" stroke={LINE} strokeWidth="1.500">T</text>],
  ["Move", 1, <><path d="M22 36l14-12M29 23h8v7" {...g} />{tile(13, 34, "url(#steel)", LINE, 13)}{tile(37, 10, "url(#blue)", LINE, 13)}</>],
  ["Copy objects", 0, <>{tile(13, 10, "url(#blue)", "#000")}{tile(37, 16, "url(#blue)", "#000")}{tile(29, 22, "url(#blue)", "#000")}{tile(13, 34, "url(#steel)", "#000")}{tile(37, 38, "url(#blue)", "#000")}</>],
  ["Rotate", 0, <><path d="M9 10h11v28H9z" fill="url(#steel)" stroke={LINE} strokeWidth="2" /><path d="M20 14q12 0 17 8M30 22h8v-6" {...g} /><path d="M24 40l20-19 7 7-20 19z" fill="url(#blue)" stroke={LINE} strokeWidth="2" /></>],
  ["Solid edit", 0, <><path d="M13 16l16-6 18 4v36H13z" fill="#6f8bf5" stroke="#000" strokeWidth="2.500" /><path d="M14 17l15-6 17 4-15 8z" fill="#bccafc" /></>],
  ["Extrude", 0, <path d="M18 50V20M30 50V20M42 50V20M14 19l4-7 4 7zM26 19l4-7 4 7zM38 19l4-7 4 7z" stroke="#fff" strokeWidth="3.500" fill="#fff" />],
  ["Array", 0, <>{[0, 1, 2].map((i) => <React.Fragment key={i}>{tile(11 + i * 14, 10, "#b9c6fb", LINE, 8)}{tile(11 + i * 14, 24, "#b9c6fb", LINE, 8)}</React.Fragment>)}</>],
  ["Align", 0, <><path d="M20 10h19v9H20zM24 23h11v8H24z" fill="url(#steel)" stroke={LINE} /><path d="M30 7v30" stroke="#c4302b" strokeWidth="3" /></>],
];

/* ---------- 3D scene ---------- */

const RAD = Math.PI / 180;
const CAM = { x: 21.74, y: -27.62, z: 18.32, yaw: 126.3 * RAD, pitch: 27.83 * RAD, f: 2704 };
const toCam = (x, y, z) => {
  const dx = x - CAM.x, dy = y - CAM.y, dz = z - CAM.z;
  const fwd = dx * Math.cos(CAM.yaw) + dy * Math.sin(CAM.yaw);
  const side = dx * Math.sin(CAM.yaw) - dy * Math.cos(CAM.yaw);
  return [side, fwd * Math.sin(CAM.pitch) + dz * Math.cos(CAM.pitch), fwd * Math.cos(CAM.pitch) - dz * Math.sin(CAM.pitch)];
};
const screen = ([s, u, d]) => [649 + (CAM.f * s) / d, 978 - (CAM.f * u) / d];
const project = (x, y, z) => screen(toCam(x, y, z));
const fmt = (p) => `${p[0].toFixed(1)} ${p[1].toFixed(1)}`;
const segment = (a, b) => {
  let p = toCam(...a), q = toCam(...b);
  const near = 4;
  if (p[2] < near && q[2] < near) return "";
  const cut = (m, n) => {
    const t = (near - m[2]) / (n[2] - m[2]);
    return m.map((v, i) => v + (n[i] - v) * t);
  };
  if (p[2] < near) p = cut(p, q);
  if (q[2] < near) q = cut(q, p);
  return `M${fmt(screen(p))}L${fmt(screen(q))}`;
};
const EXT = 70;
const gridPath = (major) => {
  let d = "";
  for (let i = -EXT; i <= EXT; i++) {
    if ((i % 5 === 0) !== major) continue;
    d += segment([i, -EXT, 0], [i, EXT, 0]) + segment([-EXT, i, 0], [EXT, i, 0]);
  }
  return d;
};
const ring = (r, z) =>
  Array.from({ length: 120 }, (_, i) => project(r * Math.cos(i * 3 * RAD), r * Math.sin(i * 3 * RAD), z));
const closed = (pts) => "M" + pts.map(fmt).join("L") + "Z";
const open = (pts) => "M" + pts.map(fmt).join("L");
const radius = (z) => 2 - 0.4375 * z + 0.09375 * z * z;
const heights = Array.from({ length: 33 }, (_, i) => i / 8);
const extreme = (pts, sign) => pts.reduce((m, p) => (p[0] * sign > m[0] * sign ? p : m));
const arc = (pts, lower) => {
  const l = extreme(pts, -1), r = extreme(pts, 1);
  const side = (p) => p[1] > l[1] + ((r[1] - l[1]) * (p[0] - l[0])) / (r[0] - l[0]);
  return pts.filter((p) => side(p) === lower).sort((a, b) => a[0] - b[0]);
};
const topRing = ring(1.75, 4), baseRing = ring(2, 0);
const leftSide = heights.map((z) => extreme(ring(radius(z), z), -1));
const rightSide = heights.map((z) => extreme(ring(radius(z), z), 1));
const bodyPath = closed([...leftSide, ...arc(topRing, true), ...rightSide.slice().reverse(), ...arc(baseRing, false).reverse()]);
const seam = open(heights.map((z) => project(radius(z), 0, z)));

const Cross = ({ at }) => {
  const [x, y] = project(...at);
  return <path d={`M${x - 6} ${y - 6}l12 12M${x + 6} ${y - 6}l-12 12`} stroke="#8f1a12" strokeWidth="7" strokeLinecap="square" />;
};

const Scene = () => (
  <svg viewBox="0 0 1298 1956" preserveAspectRatio="xMidYMid slice" role="img" aria-label="Perspective view">
    <defs>
      <linearGradient id="body" x1="0" x2="1" y1="0" y2="0">
        <stop offset="0" stopColor="#6a3d41" /><stop offset="0.2" stopColor="#753739" /><stop offset="0.5" stopColor="#823536" />
        <stop offset="0.75" stopColor="#793738" /><stop offset="1" stopColor="#64434a" />
      </linearGradient>
      <linearGradient id="cap" x1="0" x2="1" y1="0.4" y2="0">
        <stop offset="0" stopColor="#6f6e73" /><stop offset="0.4" stopColor="#936669" /><stop offset="0.65" stopColor="#a06a6e" /><stop offset="1" stopColor="#936266" />
      </linearGradient>
      <linearGradient id="foot" x1="0" x2="1" y1="0" y2="0">
        <stop offset="0" stopColor="#9a666a" /><stop offset="0.45" stopColor="#a2696d" /><stop offset="1" stopColor="#77646a" />
      </linearGradient>
      <radialGradient id="shine" cx="0.4" cy="1" r="0.3">
        <stop offset="0" stopColor="#d09a9c" stopOpacity="0.8" /><stop offset="1" stopColor="#d09a9c" stopOpacity="0" />
      </radialGradient>
    </defs>
    <path d={gridPath(false)} stroke="#92989f" strokeWidth="1" fill="none" />
    <path d={gridPath(true)} stroke="#83888d" strokeWidth="1.300" fill="none" />
    <path d={segment([0, 0, 0], [EXT, 0, 0])} stroke="#91474a" strokeWidth="2.500" />
    <path d={segment([0, 0, 0], [0, EXT, 0])} stroke="#5f9553" strokeWidth="2.500" />
    <path d={bodyPath} fill="url(#body)" fillOpacity="0.95" />
    <path d={closed(topRing)} fill="url(#cap)" fillOpacity="0.93" />
    <path d={closed(baseRing)} fill="url(#foot)" fillOpacity="0.9" />
    <path d={closed(baseRing)} fill="url(#shine)" />
    <path d={segment([0, 0, 0], [2, 0, 0])} stroke="#8a3438" strokeWidth="2.500" />
    <path d={segment([0, 0, 0], [0, 3.2, 0])} stroke="#5c4a1c" strokeWidth="2" />
    <g fill="none" stroke="#a01c18" strokeWidth="1.600">
      <path d={closed(ring(1, 8))} /><path d={closed(ring(5, 4))} /><path d={closed(topRing)} />
      <path d={closed(ring(1.5, 2))} /><path d={closed(baseRing)} /><path d={seam} />
    </g>
    <Cross at={[0, 0, 8]} /><Cross at={[0, 0, 4]} /><Cross at={[0, 0, 2]} /><Cross at={[0, 0, 0]} />
    <path d="M72 1830v54l50 17M72 1884l32-21" fill="none" stroke="#707274" strokeWidth="1.500" />
    <g fontFamily="Inter, sans-serif" fontSize="27" fontWeight="300" fill="#5f6062">
      <text x="77" y="1832">z</text><text x="112" y="1860">y</text><text x="126" y="1903">x</text>
    </g>
  </svg>
);

/* ---------- panel icons ---------- */

const blueLine = { fill: "none", stroke: "#3078e6", strokeWidth: 2.2 };
const viewIcons = [
  ["Camera", <><path d="M8 16h10l5-7h15l5 7h9v26H8z" {...blueLine} /><circle cx="30" cy="29" r="13" {...blueLine} /><circle cx="30" cy="29" r="9" {...blueLine} /></>],
  ["Frame", <><rect x="9" y="10" width="42" height="38" {...g} strokeWidth="3" stroke="#9a9a9a" /><rect x="13" y="14" width="34" height="30" {...g} strokeWidth="1.500" stroke="#666" /><rect x="17" y="18" width="26" height="22" {...g} strokeWidth="1.500" stroke="#606060" /></>],
  ["Links", <><circle cx="39" cy="15" r="7.500" {...g} stroke="#888" /><circle cx="30" cy="25" r="9" {...g} stroke="#999" /><circle cx="19" cy="37" r="11.500" fill="#333" stroke="#b0b0b0" strokeWidth="2" /></>],
];
const layerIcons = [
  ["Layers", <><path d="M8 33l22 14 22-14M8 24l22-15 22 15-22 14z" {...blueLine} /></>],
  ["Layer states", <><path d="M8 33l22 13M8 24l20-14 22 14M8 24l21 13 6-4" {...g} /><path d="M34 26h10l7 7v19H34z" fill="#333" stroke={LINE} strokeWidth="2" /></>],
  ["Document", <><path d="M17 10h16l8 8v27H17z" {...g} /><path d="M33 10v8h8" {...g} /></>],
  ["Blocks", <path d="M13 20l15-10 19 6v26l-14 9-20-8zM13 20l20 6 14-10M33 26v25" {...g} />],
  ["Notes", <path d="M17 40V18q0-6 6-6h27v6h-7V44q0 6-7 6H11q-3-8 4-9h20q-4 7 3 8" {...g} />],
  ["Display", <><rect x="9" y="11" width="42" height="31" rx="2" {...g} /><rect x="13" y="15" width="34" height="20" {...g} /><path d="M25 42v6h10v-6M18 49h25" {...g} /></>],
  ["Help", <><circle cx="30" cy="30" r="19.500" {...g} /><path d="M22 24q0-8 8-8t8 7q0 5-8 9v5M30 40v4" {...g} strokeWidth="3" /></>],
  ["Sheets", <><path d="M13 9h27l7 7v36H13z" {...g} /><path d="M17 16h26v31H17zM30 16v31M17 31h26" {...g} stroke="#6a6a6a" /></>],
  ["Materials", <><ellipse cx="30" cy="47" rx="21" ry="7" fill="#666" /><circle cx="28" cy="32" r="18" fill="#333" stroke={LINE} strokeWidth="2.500" /><path d="M23 20l9-10h15v10q-7 0-9 4l-4-1-5 3-1-3z" fill="#333" stroke={LINE} strokeWidth="2" /><path d="M47 8h5v13h-5z" fill={LINE} /></>],
];

const Icons = ({ items }) => (
  <IconRow>
    {items.map(([name, art]) => (
      <IconButton key={name} aria-label={name}><Glyph>{art}</Glyph></IconButton>
    ))}
  </IconRow>
);

/* ---------- ribbon icons ---------- */

const w = { fill: "none", stroke: "#f2f2f2", strokeWidth: 3 };
const Free = ({ children }) => <svg width="48" height="44" viewBox="0 -1 48 44" aria-hidden="true">{children}</svg>;
const Hex = ({ children }) => (
  <Free>
    <path d="M12 1h24l11 20-11 20H12L1 21z" fill="url(#hexfill)" stroke="#050505" strokeWidth="2" />
    <path d="M13 3h22l10 18" fill="none" stroke="#777" strokeWidth="1" />
    {children}
  </Free>
);
const Tile = ({ fill = "url(#steel)", children }) => (
  <Free>
    <rect x="2" y="0" width="44" height="42" rx="3" fill={fill} stroke="#111" strokeWidth="2" />
    {children}
  </Free>
);
const hexText = (t, s) => (
  <text x="24" y="31" textAnchor="middle" fontFamily="Liberation Serif, serif" fontWeight="700" fontSize={s} fill="#f4f4f4">{t}</text>
);
const greens = ["#9be04a", "#4e9c2c", "#b6f060", "#3a7a20", "#7fd83c", "#2b5a18", "#c8f580", "#68c832"];

const ribbon = [
  ["Geometry", [
    [["Point", <Hex><path d="M19 15l10 12M29 15L19 27" {...w} strokeWidth="5" /></Hex>],
      ["Vector", <Hex><path d="M15 32L28 18" {...w} strokeWidth="6" /><path d="M21 12h14v13z" fill="#fff" /></Hex>]],
    [["Circle", <Hex><circle cx="24" cy="21" r="12" {...w} /></Hex>],
      ["Circular arc", <Hex><path d="M13 11q18 2 18 24M22 35h13" {...w} /></Hex>],
      ["Curve", <Hex><g transform="rotate(-35 24 21)"><ellipse cx="24" cy="21" rx="17" ry="10" {...w} strokeWidth="2" /><ellipse cx="26" cy="21" rx="11" ry="6" {...w} stroke="#bbb" strokeWidth="2" /><ellipse cx="27" cy="21" rx="5" ry="3" {...w} stroke="#999" strokeWidth="2" /></g></Hex>],
      ["Line", <Hex><path d="M15 31L33 11" {...w} /><path d="M12 28h6v6h-6zM30 8h6v6h-6z" fill="#111" stroke="#fff" strokeWidth="2" /></Hex>],
      ["Plane", <Hex><path d="M12 16l18-8 10 12-22 13z" {...w} /><path d="M20 19l8-3 4 6-9 4z" fill="#bbb" /></Hex>],
      ["Rectangle", <Hex><path d="M12 7l24 28M36 7L12 35" stroke="#777" strokeWidth="2" /><path d="M24 10l9 11-9 11-9-11z" fill="#161616" stroke="#f2f2f2" strokeWidth="2.500" /></Hex>]],
    [["Box", <Hex><path d="M14 13l12-6 10 5v18l-9 6-13-5z" fill="#ccc" stroke="#fff" strokeWidth="2" /><path d="M14 13l13 4 9-5M27 17v19" stroke="#666" fill="none" /></Hex>],
      ["Brep", <Hex><path d="M11 19L28 6l11 10-2 12-13 9-9-5z" fill="#ddd" stroke="#fff" /><ellipse cx="31" cy="14" rx="6" ry="5" fill="#777" stroke="#fff" /></Hex>],
      ["Mesh", <Hex><path d="M12 11h24M12 21h24M12 31h24M14 8v26M24 6v30M34 8v26M14 11l20 20M34 11L14 31" stroke="#c4c4c4" strokeWidth="1.500" /></Hex>],
      ["Surface", <Hex><path d="M19 8h15v27l-9-5-15-2q6-8 9-20z" fill="#ddd" /><path d="M25 8v22M15 20h19" stroke="#555" strokeWidth="1.500" /></Hex>]],
  ]],
  ["Primitive", [
    [["Boolean", <Hex><circle cx="24" cy="21" r="11" fill="#fff" /><path d="M31 14a10 10 0 0 0-15 13z" fill="#111" /></Hex>],
      ["Integer", <Hex>{hexText("7", 30)}</Hex>],
      ["Number", <Hex>{hexText("0.1", 25)}</Hex>],
      ["Text", <Hex>{hexText("A", 31)}</Hex>]],
  ]],
  ["Input", [
    [["Import", <Tile><path d="M24 9v14M18 19l6 8 6-8z" stroke="#000" strokeWidth="3" /><path d="M8 33h32M10 33v6M16 33v6M22 33v6M28 33v6M34 33v6M39 33v6" stroke="#000" strokeWidth="2" /></Tile>],
      ["Graph", <Tile fill="#f9c64a"><path d="M7 33q5-9 7-3-1 7 5-5 5-8 3 5 1 6 7-10 4-9 3 4 2 4 8-14" fill="none" stroke="#8c4a12" strokeWidth="3.500" /></Tile>]],
    [["Button", <Tile><rect x="14" y="5" width="19" height="33" fill="#222" /><rect x="16" y="7" width="15" height="14" fill="#ccc" /></Tile>],
      ["Knob", <Free><circle cx="24" cy="21" r="18" fill="#222" stroke="#999" strokeWidth="5" /><path d="M38 14l10 7-10 7z" fill="#333" /></Free>],
      ["Digits", <Tile><g fill="#3a3a3a" fontFamily="Liberation Sans, sans-serif" fontWeight="700" fontSize="19"><text x="19" y="18" opacity="0.6">4</text><text x="17" y="36">5</text></g></Tile>],
      ["List", <Tile><path d="M6 9h36M6 21h36M6 33h36" stroke="#333" strokeWidth="9" /><path d="M8 9h32M8 21h32M8 33h32" stroke="#eee" strokeWidth="5" /></Tile>]],
    [["Gradient", <Tile fill="url(#pink)"><path d="M3 27h42" stroke="#000" strokeWidth="2" /><circle cx="6" cy="27" r="3.500" fill="#fff" stroke="#000" strokeWidth="2" /><circle cx="33" cy="27" r="3.500" fill="#fff" stroke="#000" strokeWidth="2" /></Tile>],
      ["Image", <Tile>{Array.from({ length: 16 }, (_, i) => <rect key={i} x={3 + (i % 4) * 10.5} y={1 + Math.floor(i / 4) * 10} width="10.500" height="10" fill={greens[(i * 5 + Math.floor(i / 4)) % 8]} />)}</Tile>]],
  ]],
  ["Util", [
    [["Cherry picker", <Free><path d="M15 27Q22 14 28 6q3 12 5 22" fill="none" stroke="#5a1c14" strokeWidth="2.500" /><path d="M27 1q-14-2-18 13 13 0 18-13z" fill="#5fa82c" /><circle cx="14" cy="29" r="9" fill="#c8201a" /><circle cx="34" cy="33" r="9" fill="#b81a15" /><circle cx="11" cy="26" r="3" fill="#f08a80" /></Free>],
      ["Tree", <Tile><path d="M20 34l2-14-9-7M28 34l-2-16 9-8M24 22V6M22 20l-12-1M27 19l12-2" stroke="#111" strokeWidth="4" fill="none" /><circle cx="24" cy="13" r="12" fill="#222" opacity="0.5" /><path d="M3 34h42v7H3z" fill="#000" /></Tile>]],
    [["Jump", <Free><path d="M6 15h18V7l16 14-16 14v-8H6z" fill="#3a3a3a" stroke="#777" strokeWidth="2.500" /></Free>],
      ["Relay", <Free><path d="M6 15h18V7l16 14-16 14v-8H6z" fill="#e6e6e6" stroke="#999" strokeWidth="1.500" /></Free>]],
    [["Cluster", <Free><path d="M30 6q11 5 10 19-3 13-14 16-12-2-14-10 9-3 14-9z" fill="#a83a62" /><circle cx="19" cy="14" r="9" fill="#444" stroke="#cfcfcf" strokeWidth="6" /><circle cx="28" cy="30" r="6" fill="#f0b4cf" /></Free>],
      ["Flask", <Free><path d="M21 3h7v12l12 20q1 5-4 5H13q-5 0-4-5l12-20z" fill="#e05a9a" stroke="#bbb" strokeWidth="2" /><path d="M21 3h7v10h-7z" fill="#ddd" /></Free>]],
  ]],
];

const Bi = ({ children }) => <svg width="28" height="28" viewBox="0 0 32 32" aria-hidden="true">{children}</svg>;
const gem = (f, e) => <><path d="M3 15L15 3l11 3 4 9-7 11-12 3-6-5z" fill={f} stroke={e} strokeWidth="1.500" /><ellipse cx="22" cy="9" rx="6" ry="4" fill={e} opacity="0.700" /><path d="M9 14l7-6" stroke="#fff" strokeWidth="2.500" opacity="0.700" /></>;

const leftBar = [
  ["Open file", <Bi><path d="M8 1h9l5 5v10H8z" fill="#eee" /><path d="M4 14l10-2 3 3h11v16H4z" fill="#7cc24a" stroke="#4c8c2a" /></Bi>],
  ["Save file", <Bi><path d="M1 1h30v30H4l-3-3z" fill="#2456d8" stroke="#12308a" /><path d="M6 2h20v12H6z" fill="#dde6fa" /><path d="M8 20h16v10H8z" fill="#c8d0e6" /><path d="M11 22h5v8h-5z" fill="#2456d8" /></Bi>],
];
const viewBar = [
  ["Zoom extents", <Bi><path d="M3 11V3h8M21 3h8v8M29 21v8h-8M11 29H3v-8M13 13l6 6M19 13l-6 6" fill="none" stroke="#2a2a2a" strokeWidth="5" /></Bi>, 8],
  ["Preview", <Bi><ellipse cx="16" cy="16" rx="14" ry="9" fill="#f2f2f2" /><circle cx="16" cy="16" r="9" fill="#4aa4d8" /><circle cx="16" cy="16" r="4" fill="#0b1c30" /></Bi>, 26],
  ["Sketch", <Bi><path d="M14 20L29 2q3 10-4 18l-7 7z" fill="#d8402c" /><path d="M14 20l5 6-4 4-4-5z" fill="#f5c93c" /><path d="M3 8q8-1 5 10-3 12 6 11" fill="none" stroke="#5a1c14" strokeWidth="2.500" /></Bi>, 24],
];
const previewBar = [
  ["No preview", <Bi><path d="M9 4l9-3 7 5-3 9-12 2-4-6z" fill="#ddd" /><path d="M4 17q12-5 24 0-3 8-12 8T4 17z" fill="#333" /><ellipse cx="16" cy="27" rx="11" ry="4" fill="none" stroke="#999" /></Bi>, false],
  ["Wireframe", <Bi><path d="M3 15L15 3l11 3 4 9-7 11-12 3-6-5zM9 9l8 18M18 4l8 19" fill="none" stroke="#3c3c3c" strokeWidth="3" /></Bi>, false],
  ["Shaded", <Bi>{gem("#c4281c", "#7a1410")}</Bi>, true],
];
const gemBar = [
  ["Selected only", <Bi><path d="M3 3q12 0 8 12-4 10 14 14L10 24q-6-8-2-14z" fill="#333" />{gem("#2f9c9c", "#125a5e")}</Bi>],
  ["Document preview", <Bi><path d="M2 18l8-6 11 13-7 6-9-4z" fill="#eee" /><path d="M10 9L18 1l12 4 1 9-7 10z" fill="#7cb82a" stroke="#4a7c12" /><path d="M10 10l14 15" stroke="#333" strokeWidth="2.500" /></Bi>],
  ["Material preview", <Bi><circle cx="16" cy="15" r="13" fill="#eee" /><path d="M16 2a13 13 0 0 0 0 26z" fill="#e07a28" /></Bi>],
];

/* ---------- graph ---------- */

const OX = 2117, OY = 281;
const PT = { ins: ["X", "Y", "Z"], outs: ["Pt"], w: 80, h: 88, cols: "17px 34px 1fr", name: "Pt", skin: "plain" };
const CI = { ins: ["C", "N", "R"], outs: ["C"], w: 78, h: 88, cols: "18px 34px 1fr", name: "Circle", skin: "plain" };
const RM = { ins: ["V", "S", "T"], outs: ["R", "C"], w: 77, h: 88, cols: "17px 34px 1fr", name: "ReMap", skin: "muted" };
const nodes = {
  pt1: { ...PT, x: 2940, y: 505 }, c1: { ...CI, x: 3085, y: 556 },
  pt2: { ...PT, x: 2946, y: 756 }, c2: { ...CI, x: 3091, y: 783 },
  pt3: { ...PT, x: 2984, y: 936 }, c3: { ...CI, x: 3125, y: 1008 },
  pt4: { ...PT, x: 2935, y: 1237 }, c4: { ...CI, x: 3107, y: 1259 },
  pt5: { ...PT, x: 2998, y: 1457 }, c5: { ...CI, x: 3165, y: 1498 },
  r1: { ...RM, x: 2502, y: 666 }, r2: { ...RM, x: 2501, y: 775 },
  r3: { ...RM, x: 2497, y: 881 }, r4: { ...RM, x: 2569, y: 1132, skin: "picked" },
  loft: { ins: ["C", "O"], outs: ["L"], w: 77, h: 61, cols: "18px 34px 1fr", name: "Loft", skin: "plain", x: 3475, y: 738 },
};
const sliders = {
  value: { x: 2162, y: 745, w: 215, lab: 49, name: "Value", v: 1, at: 12 },
  s1: { x: 2813, y: 643, w: 221, lab: 51, name: "Slider", v: 2, at: 17 },
  s2: { x: 2625, y: 806, w: 260, lab: 51, name: "Slider", v: 4, at: 31 },
  s3: { x: 2819, y: 870, w: 221, lab: 51, name: "Slider", v: 3, at: 22 },
  s4: { x: 2663, y: 1011, w: 260, lab: 51, name: "Slider", v: 8, at: 56 },
  s5: { x: 2857, y: 1075, w: 221, lab: 51, name: "Slider", v: 3, at: 22 },
  s6: { x: 2133, y: 1099, w: 222, lab: 51, name: "Slider", v: 4, at: 13 },
  s7: { x: 2134, y: 1202, w: 219, lab: 51, name: "Slider", v: 2, at: 13 },
  rad: { x: 2703, y: 1339, w: 220, lab: 56, name: "Radius", v: 5, at: 13 },
};
const notes = [
  [3070, 664, 93, 27, "Top Circle"],
  [3076, 883, 112, 28, "Middle Circle"],
  [3101, 1109, 98, 28, "Base Circle"],
  [2170, 1320, 391, 128, "Figire out how to set start values so they move together"],
];
const portY = (h, n, i) => Math.round(4 + ((h - 8) * (i + 0.5)) / n);
const inAt = (n, i) => [n.x - OX - 4, n.y - OY + portY(n.h, n.ins.length, i)];
const outAt = (n, i) => [n.x - OX + n.w + 4, n.y - OY + portY(n.h, n.outs.length, i)];
const sliderOut = (s) => [s.x - OX + s.w + 4, s.y - OY + 14];
const N = nodes;
const wires = [
  [sliderOut(sliders.value), inAt(N.r1, 0)], [sliderOut(sliders.value), inAt(N.r2, 0)], [sliderOut(sliders.value), inAt(N.r3, 0)],
  [outAt(N.r1, 0), inAt(N.c1, 2)], [outAt(N.r2, 0), inAt(N.c2, 2)], [outAt(N.r3, 0), inAt(N.c3, 2)],
  [outAt(N.pt1, 0), inAt(N.c1, 0)], [outAt(N.pt2, 0), inAt(N.c2, 0)], [outAt(N.pt3, 0), inAt(N.c3, 0)],
  [outAt(N.pt4, 0), inAt(N.c4, 0)], [outAt(N.pt5, 0), inAt(N.c5, 0)], [sliderOut(sliders.rad), inAt(N.c4, 2)],
  [outAt(N.c1, 0), inAt(N.loft, 0)], [outAt(N.c2, 0), inAt(N.loft, 0)], [outAt(N.c3, 0), inAt(N.loft, 0)],
];
const wirePath = ([[x1, y1], [x2, y2]]) => {
  const k = Math.hypot(x2 - x1, y2 - y1) / 2;
  return `M${x1} ${y1}C${x1 + k} ${y1} ${x2 - k} ${y2} ${x2} ${y2}`;
};

const Node = ({ n }) => (
  <NodeWrap $x={n.x - OX} $y={n.y - OY} $w={n.w} $h={n.h}>
    {n.ins.map((p, i) => <PortDot key={"i" + p} $side="in" $y={portY(n.h, n.ins.length, i)} />)}
    {n.outs.map((p, i) => <PortDot key={"o" + p} $side="out" $y={portY(n.h, n.outs.length, i)} />)}
    <NodeBody $skin={n.skin} $cols={n.cols} $pad="1px 0">
      <Ports>{n.ins.map((p) => <span key={p}>{p}</span>)}</Ports>
      <NodeName>{n.name}</NodeName>
      <Ports>{n.outs.map((p) => <span key={p}>{p}</span>)}</Ports>
    </NodeBody>
  </NodeWrap>
);

const Slider = ({ id, s }) => {
  const inner = s.w - s.lab - 4;
  const span = inner - 24;
  return (
    <NodeWrap $x={s.x - OX} $y={s.y - OY} $w={s.w} $h={28}>
      <PortDot $side="out" $y={14} />
      <NodeBody $skin="plain" $cols={`${s.lab}px 1fr`}>
        <SliderName htmlFor={id}>{s.name}</SliderName>
        <SliderTrack>
          <Ticks viewBox={`0 0 ${span} 12`}>
            <path
              d={`M0 9.500H${span}` + Array.from({ length: 11 }, (_, i) => `M${1 + (i * (span - 2)) / 10} 9.500V${i % 5 ? 4 : 1}`).join("")}
              stroke="#b2b2b2" strokeWidth="1.500" fill="none"
            />
          </Ticks>
          <Range id={id} min={4} max={inner - 4} defaultValue={s.at} />
          <SliderValue htmlFor={id} style={{ left: s.at + 8 }}>{s.v}</SliderValue>
        </SliderTrack>
      </NodeBody>
    </NodeWrap>
  );
};

const verticals = Array.from({ length: 8 }, (_, i) => 200.5 + i * 203.6);
const horizontals = Array.from({ length: 29 }, (_, i) => 13 + i * 67.88);

const Graph = () => (
  <Canvas>
    <CanvasLayer aria-hidden="true">
      <path
        d={verticals.map((x) => `M${x} 0V2000`).join("") + horizontals.map((y) => `M0 ${y}H1600`).join("")}
        stroke="#bfbdb7" strokeWidth="2" fill="none"
      />
      {wires.map((wire, i) => (
        <path key={i} d={wirePath(wire)} stroke="#000" strokeOpacity="0.600" strokeWidth="4" fill="none" />
      ))}
      <g transform="translate(1377 1850)">
        <path d="M-36-53l12 7 7-2 2 5 6-3 3 8 7 1-4 8-22 4-12 28q-4-22 5-38z" fill="#000" />
        <circle r="39" fill="url(#dial)" stroke="#444" strokeWidth="2" />
        <circle r="36" fill="none" stroke="#fff" strokeWidth="5" />
        <path d="M-27-22l10-1 2-9-12-4zM27-22l-10-1-2-9 12-4zM-27 22l10 1 2 9-12 4zM27 22l-10 1-2 9 12 4z" fill="#fff" />
      </g>
      <rect x="-10" y="1853" width="23" height="54" rx="4" fill="#9c9c9c" stroke="#111" strokeWidth="2" />
      <path d="M2 1858h7v14H2z" fill="#e6e6e6" />
    </CanvasLayer>
    {Object.entries(nodes).map(([k, n]) => <Node key={k} n={n} />)}
    {Object.entries(sliders).map(([k, s]) => <Slider key={k} id={"sl-" + k} s={s} />)}
    {notes.map(([x, y, wd, h, text]) => (
      <NodeWrap key={text} $x={x - OX} $y={y - OY} $w={wd} $h={h}>
        <PortDot $side="in" $y={Math.round(h / 2)} /><PortDot $side="out" $y={Math.round(h / 2)} />
        <NodeBody $skin="note"><NoteText>{text}</NoteText></NodeBody>
      </NodeWrap>
    ))}
  </Canvas>
);

/* ---------- data ---------- */

const toolTabs = [
  ["Standard", 128], ["CPlanes", 118], ["Set View", 124], ["Display", 112], ["Select", 102], ["Viewport Layout", 196],
  ["Visibility", 124], ["Transform", 137], ["Curve Tools", 152], ["Surface Tools", 170], ["Solid Tools", 144],
  ["SubD Tools", 146], ["Mesh Tools", 149], ["Render Tools", 163], ["Drafting", 122],
];
const snaps = [
  ["End"], ["Near"], ["Point", 1], ["Midpoint", 1], ["Center", 1], ["Intersection", 1], ["Perpendicular"], ["Tangent"],
  ["Quadrant"], ["Knot"], ["Vertex"], ["On curve", 0, 1], ["On surface", 0, 1], ["On polysurface", 0, 1], ["On mesh", 0, 1],
  ["Project"], ["SmartTrack", 1],
];
const camera = [["Lens length:", "50"], ["Rotation:", "0"], ["X location:", "21.74"], ["Y location:", "-27.62"], ["Z location:", "18.32"]];
const layerColumns = [["Name", 84], ["", 46], ["", 46], ["", 46], ["", 60], ["", 48], ["Linetype", 114], ["", 46], ["P", 26], ["", 0]];
const editorTabs = ["Params", "Maths", "Sets", "Vector", "Curve", "Surface", "Mesh", "Intersect", "Transform", "Display", "PanelingTools", "Kangaroo2"];

const SideIcon = ({ right }) => (
  <svg width="40" height="40" viewBox="0 0 40 40" aria-hidden="true">
    <rect x="1" y="1" width="38" height="38" fill="none" stroke="#868688" strokeWidth="2" />
    <rect x={right ? 28 : 1} y="1" width="11" height="38" fill="#868688" />
  </svg>
);

const Modeller = () => (
  <Window>
    <TopBar>
      <IconButton $w={40} $h={40} aria-label="Toggle left sidebar"><SideIcon /></IconButton>
      <SnapGroup>
        <SnapButton>Grid Snap</SnapButton><SnapButton>Ortho</SnapButton><SnapButton>Planar</SnapButton>
        <SnapButton $on>SmartTrack</SnapButton><SnapButton $on>Gumball</SnapButton><SnapButton>History</SnapButton>
      </SnapGroup>
      <TopTools>
        <IconButton $w={68} aria-label="Selection filter">
          <Glyph><ellipse cx="30" cy="15" rx="16" ry="4" {...g} stroke="#868688" /><path d="M14 16l12 17v17h8V33l12-17" {...g} stroke="#868688" /><path d="M44 9h8v8M8 44v7h7" {...g} stroke="#868688" /></Glyph>
        </IconButton>
        <IconButton $w={76} aria-label="Object snaps">
          <Glyph><circle cx="30" cy="30" r="18" {...g} stroke="#606163" /><path d="M34 31h17" stroke="#868688" strokeWidth="2" /><rect x="25" y="26" width="9" height="9" fill="#868688" /></Glyph>
        </IconButton>
        <IconButton aria-label="Record history">
          <Glyph><circle cx="30" cy="30" r="20" {...g} stroke="#868688" /><circle cx="30" cy="30" r="11" {...g} stroke="#868688" /></Glyph>
        </IconButton>
        <StyleField><StyleSwatch /><StyleName>Default</StyleName></StyleField>
        <IconButton $w={40} $h={40} aria-label="Toggle right sidebar"><SideIcon right /></IconButton>
      </TopTools>
    </TopBar>
    <ToolTabs>
      {toolTabs.map(([t, wd], i) => <ToolTab key={t} $w={wd} $on={i === 0}>{t}</ToolTab>)}
    </ToolTabs>
    <Toolbar>
      {toolbar.map(([name, drop, art]) => (
        <IconButton key={name} aria-label={name}><Glyph>{art}{drop && <Drop />}</Glyph></IconButton>
      ))}
    </Toolbar>
    <Workspace>
      <Sidebar>
        <SidebarHead />
        <CommandInput placeholder="Command" aria-label="Command" />
        <ToolGrid>
          {sideTools.map(([name, drop, art]) => (
            <IconButton key={name} aria-label={name}><Glyph>{art}{!!drop && <Drop />}</Glyph></IconButton>
          ))}
        </ToolGrid>
        <SnapOptions>
          <OptionGroup $gap={6}>
            <Option><Radio name="snapmode" defaultChecked />Persistent</Option>
            <Option><Radio name="snapmode" />One shot</Option>
          </OptionGroup>
          <OptionGroup $gap={36}>
            {snaps.map(([name, on, off]) => (
              <Option key={name} $off={off}><Check defaultChecked={!!on} disabled={!!off} />{name}</Option>
            ))}
          </OptionGroup>
          <Option><Check />Disable all</Option>
        </SnapOptions>
      </Sidebar>
      <ViewColumn>
        <ViewTabs>
          <IconButton $w={64} $h={40} aria-label="Four viewports">
            <Glyph s={36} vb="0 0 36 36"><path d="M4 6h28v25H4zM18 6v25M4 18h28" {...g} stroke="#c8c8c8" /></Glyph>
          </IconButton>
          <IconButton $w={64} $h={40} aria-label="Single viewport">
            <Glyph s={36} vb="0 0 36 36"><path d="M4 6h28v25H4z" {...g} stroke="#4aa8d4" /></Glyph>
          </IconButton>
          <ViewTabRow>
            <ViewTab $on $w={223}>Perspective</ViewTab>
            <ViewTab $w={125}>Top</ViewTab>
            <ViewTab $w={144}>Front</ViewTab>
            <ViewTab $w={144}>Right</ViewTab>
            <ViewTab $w={195}>Layouts...</ViewTab>
          </ViewTabRow>
        </ViewTabs>
        <Viewport><Scene /><ViewLabel>Perspective</ViewLabel></Viewport>
      </ViewColumn>
      <Panels>
        <PanelHead>
          <PanelTitleRow $h={50}>
            <span /><PanelTitle>Properties: Viewport</PanelTitle>
            <GearButton aria-label="Viewport panel options"><Gear /><Chevron /></GearButton>
          </PanelTitleRow>
          <Icons items={viewIcons} />
        </PanelHead>
        <Section $pad="11px 0 16px">
          <Field $label={91} $h={52}>
            <FieldLabel htmlFor="vp-title">Title:</FieldLabel>
            <TextInput id="vp-title" $w="363px" defaultValue="Perspective" />
          </Field>
          <Field $label={91} $h={46}><FieldLabel as="span">Size:</FieldLabel><span>1298 x 1956</span></Field>
          <Option $indent={38} $h={38}><Check />Locked</Option>
        </Section>
        <Section $pad="12px 0 26px">
          <SectionTitle>Projection</SectionTitle>
          <Option $indent={44}><Radio name="proj" />Parallel</Option>
          <Option $indent={44}><Radio name="proj" defaultChecked />Perspective</Option>
          <Option $indent={44}><Radio name="proj" />Two point perspective</Option>
        </Section>
        <Section $pad="12px 0 28px">
          <SectionTitle>Wallpaper</SectionTitle>
          <SelectBox $w={206} $h={48} $pad="4px 0 0 54px">
            <Select aria-label="Wallpaper image"><option>Choose...</option></Select><UpDown />
          </SelectBox>
          <Option $off $indent={38} $h={40}><Check disabled />Show wallpaper</Option>
          <Option $off $indent={38} $h={40}><Check disabled />Show wallpaper as gray scale</Option>
        </Section>
        <Section $pad="12px 0 8px" $last>
          <SectionTitle $gap={4}>Camera</SectionTitle>
          {camera.map(([label, v], i) => (
            <Field key={label} $label={167} $h={54}>
              <FieldLabel htmlFor={"cam" + i}>{label}</FieldLabel>
              <TextInput id={"cam" + i} $w="118px" defaultValue={v} />
            </Field>
          ))}
        </Section>
        <LayerHeadBlock>
          <PanelTitleRow $h={48}>
            <span /><PanelTitle>Panels: Layers</PanelTitle>
            <GearButton aria-label="Layer panel options"><Gear /><Chevron /></GearButton>
          </PanelTitleRow>
          <Icons items={layerIcons} />
        </LayerHeadBlock>
        <LayerList>
          <LayerTable>
            <thead>
              <tr>
                {layerColumns.map(([t, wd], i) => (
                  <LayerHead key={i} $w={wd}><HeadCell $last={i === 9}>{t}</HeadCell></LayerHead>
                ))}
              </tr>
            </thead>
            <tbody>
              <tr>
                <LayerCell $pad={38}>D...</LayerCell>
                <LayerCell><Radio name="layer" aria-label="Current layer" defaultChecked /></LayerCell>
                <LayerCell>
                  <Glyph s={30} vb="0 0 30 30"><path d="M15 2c8 0 12 6 11 11-1 4-6 6-7 10h-8c-1-4-6-6-7-10C3 8 7 2 15 2z" fill="#b5832f" /><ellipse cx="14" cy="8" rx="6" ry="4" fill="#e0c070" /><path d="M11 23h8v5h-8z" fill="#9a9a9a" /></Glyph>
                </LayerCell>
                <LayerCell>
                  <Glyph s={32} vb="0 0 32 32"><path d="M17 14V9q0-6 6-6t6 6v5" fill="none" stroke="#777" strokeWidth="4" /><path d="M4 15h20v14H4z" fill="#a8682c" /><path d="M4 19h20M4 24h20M3 29h22" stroke="#7a4a20" strokeWidth="1.500" /></Glyph>
                </LayerCell>
                <LayerCell $right={2}><Glyph s={28} vb="0 0 28 28"><rect width="28" height="28" fill="#000" /></Glyph></LayerCell>
                <LayerCell $right={12}><Glyph s={30} vb="0 0 30 30"><circle cx="15" cy="15" r="13" fill="#fff" stroke="#000" strokeWidth="2.500" /></Glyph></LayerCell>
                <LayerCell $pad={13}>
                  <SelectBox $w={90} $h={30}><Select aria-label="Linetype"><option>Conti...</option></Select><UpDown /></SelectBox>
                </LayerCell>
                <LayerCell><Glyph s={30} vb="0 0 30 30"><path d="M15 0l15 15-15 15L0 15z" fill="#000" /></Glyph></LayerCell>
                <LayerCell $right={6}><UpDown /></LayerCell>
                <LayerCell />
              </tr>
            </tbody>
          </LayerTable>
        </LayerList>
        <PanelFoot>
          <Segments>
            <Segment $w={46} aria-label="Add layer"><svg width="22" height="22" viewBox="0 0 22 22"><path d="M11 0v22M0 11h22" stroke="#f0f0f0" strokeWidth="2.500" /></svg></Segment>
            <Segment $w={45} $split aria-label="Remove layer" disabled><svg width="22" height="22" viewBox="0 0 22 22"><path d="M0 11h22" stroke="#8c8c8c" strokeWidth="2.500" /></svg></Segment>
          </Segments>
          <Segments>
            <Segment $w={68} aria-label="Layer actions"><Gear c="#262626" hole="#6a6a6a" /><Chevron s={16} /></Segment>
          </Segments>
        </PanelFoot>
      </Panels>
    </Workspace>
    <StatusBar>
      <svg width="28" height="20" viewBox="0 0 28 20" aria-hidden="true"><path d="M0 1h28M0 7h28M0 13h28M0 19h28" stroke="#b0b0b0" strokeWidth="2" /></svg>
      <span>Successfully read file "/Users/megan/Library/Mobile Documents/com~apple~CloudDocs/Year 3/O...</span>
      <span>Millimeters</span>
      <SelectBox $framed $w={140} $h={32} $pad="0 8px 0 12px">
        <Select aria-label="Coordinate system" disabled><option>CPlane</option></Select><UpDown c="#6a6a6a" />
      </SelectBox>
      <span>9.325</span><span>2.273</span><span>0.000</span>
    </StatusBar>
  </Window>
);

const Editor = () => (
  <Window>
    <EditorTabs>
      {editorTabs.map((t, i) => <EditorTab key={t} $on={i === 0}>{t}</EditorTab>)}
    </EditorTabs>
    <Ribbon>
      {ribbon.map(([name, groups]) => (
        <RibbonPanel key={name}>
          <RibbonBody>
            {groups.map((items, i) => (
              <RibbonGroup key={i}>
                {items.map(([label, art]) => <IconButton key={label} $w={48} $h={44} aria-label={label}>{art}</IconButton>)}
              </RibbonGroup>
            ))}
          </RibbonBody>
          <RibbonFoot>
            <RibbonName>{name}</RibbonName>
            <svg width="14" height="16" viewBox="0 0 14 16" aria-hidden="true"><path d="M7 1v10M3 8l4 6 4-6z" fill="#999" stroke="#999" strokeWidth="2" /></svg>
          </RibbonFoot>
        </RibbonPanel>
      ))}
    </Ribbon>
    <EditorBar>
      <BarGroup $gap={8}>
        {leftBar.map(([n, art]) => <BarButton key={n} aria-label={n}>{art}</BarButton>)}
      </BarGroup>
      <BarGroup $gap={10} $left="10px">
        <BarRule />
        <ZoomBox>
          <BarSelect aria-label="Zoom"><option>68%</option></BarSelect>
          <ZoomArrow><Chevron c="#fff" s={18} /></ZoomArrow>
        </ZoomBox>
      </BarGroup>
      {viewBar.map(([n, art, gap]) => (
        <BarGroup key={n} $left={gap + "px"}><BarButton aria-label={n}>{art}</BarButton></BarGroup>
      ))}
      <BarGroup $gap={6} $left="auto">
        {previewBar.map(([n, art, on]) => <BarButton key={n} $on={on} aria-label={n}>{art}</BarButton>)}
      </BarGroup>
      <BarGroup $gap={16} $left="16px">
        <BarRule />
        <BarGroup $gap={4}>{gemBar.map(([n, art]) => <BarButton key={n} aria-label={n}>{art}</BarButton>)}</BarGroup>
      </BarGroup>
      <BarGroup $gap={6} $left="6px">
        <BarRule />
        <BarButton aria-label="Preview quality"><Bi><path d="M9 4h13l7 8-2 11-10 6-10-4-4-11z" fill="url(#sky)" stroke="#2c3f88" strokeWidth="1.500" /></Bi></BarButton>
      </BarGroup>
    </EditorBar>
    <Graph />
    <EditorStatus>
      <StatusText>
        <svg width="26" height="30" viewBox="0 0 26 30" aria-hidden="true"><ellipse cx="13" cy="15" rx="12" ry="14" fill="#2a8ae0" stroke="#14246e" strokeWidth="2" /><path d="M13 6v11M13 20v4" stroke="#fff" strokeWidth="4" /></svg>
        Autosave complete (9 seconds ago)
      </StatusText>
      <span>1.0.0007</span>
    </EditorStatus>
  </Window>
);

export default function App() {
  return (
    <>
      <GlobalStyle />
      <Defs />
      <Desktop>
        <Modeller />
        <Splitter><SplitterGrip /></Splitter>
        <Editor />
      </Desktop>
    </>
  );
}
